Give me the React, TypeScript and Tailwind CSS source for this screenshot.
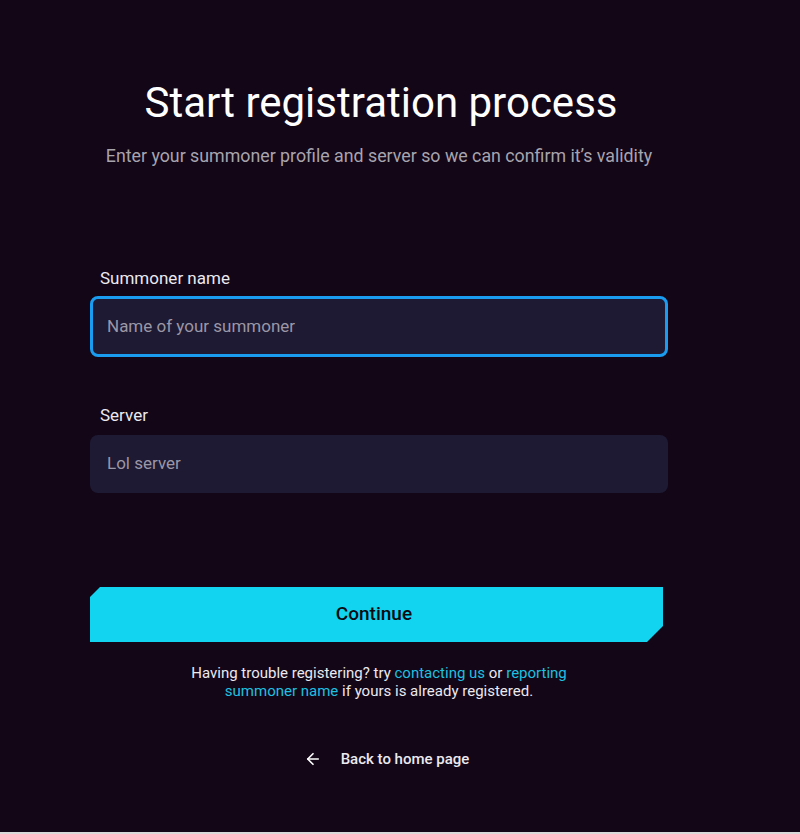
import { ArrowLeft } from 'lucide-react'

export default function App() {
  return (
    <div
      className="h-[834px] w-[800px] bg-[#d9d9d9] text-white"
      style={{ fontFamily: 'Roboto, "Noto Sans", sans-serif' }}
    >
      <div className="h-[832px] bg-[#120617] pt-[78px]">
        <div className="ml-[90px] w-[578px]">
          {/* Header */}
          <div className="flex flex-col items-center">
            <h1 className="whitespace-nowrap pl-[4px] text-[42px] font-normal leading-[50px] text-white">
              Start registration process
            </h1>
            <p className="mt-[16px] whitespace-nowrap text-[17.8px] leading-[24px] text-[#a8a4ad]">
              Enter your summoner profile and server so we can confirm it’s validity
            </p>
          </div>

          {/* Form */}
          <div className="mt-[99px]">
            <label className="block pl-[10px] text-[17px] leading-[22px] text-[#ece9ef]">Summoner name</label>
            <div className="mt-[7px] flex h-[61px] items-center rounded-[8px] border-[3px] border-[#1a9cf0] bg-[#1e1a33] pl-[14px]">
              <span className="text-[17px] text-[#9b97a6]">Name of your summoner</span>
            </div>

            <label className="mt-[47px] block pl-[10px] text-[17px] leading-[22px] text-[#ece9ef]">Server</label>
            <div className="mt-[9px] flex h-[58px] items-center rounded-[8px] bg-[#1e1a33] pl-[17px]">
              <span className="text-[17px] text-[#9b97a6]">Lol server</span>
            </div>
          </div>

          {/* Continue */}
          <button
            className="mt-[94px] flex h-[55px] w-[573px] items-center justify-center bg-[#12d3f0] pr-[5px] text-[19px] font-medium text-[#0a0a12]"
            style={{ clipPath: 'polygon(10px 0, 100% 0, 100% calc(100% - 16px), calc(100% - 16px) 100%, 0 100%, 0 10px)' }}
          >
            Continue
          </button>

          {/* Help */}
          <p className="mt-[22px] text-center text-[15px] leading-[18px] text-[#ece9ef]">
            Having trouble registering? try <span className="text-[#1ec0e0]">contacting us</span> or{' '}
            <span className="text-[#1ec0e0]">reporting</span>
            <br />
            <span className="text-[#1ec0e0]">summoner name</span> if yours is already registered.
          </p>

          {/* Back */}
          <div className="mt-[48px] flex items-center justify-center gap-[19px] pl-[15px]">
            <ArrowLeft size={18} strokeWidth={2.2} className="text-white" />
            <span className="text-[15px] font-medium text-[#ece9ef]">Back to home page</span>
          </div>
        </div>
      </div>
    </div>
  )
}
